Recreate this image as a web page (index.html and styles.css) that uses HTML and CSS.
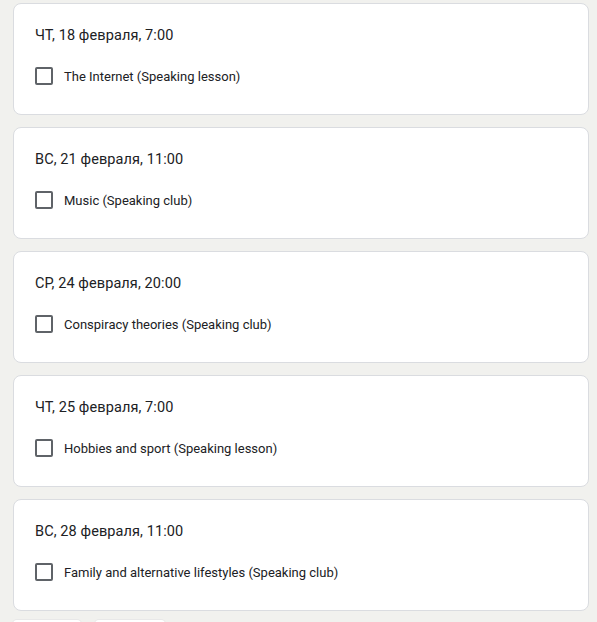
FILE: index.html
```html
<!DOCTYPE html>
<html lang="ru">
<head>
<meta charset="utf-8">
<link rel="stylesheet" href="styles.css">
</head>
<body>
<div class="list">
  <div class="card">
    <div class="title">ЧТ, 18 февраля, 7:00</div>
    <label class="option"><span class="box"></span><span class="text">The Internet (Speaking lesson)</span></label>
  </div>
  <div class="card">
    <div class="title">ВС, 21 февраля, 11:00</div>
    <label class="option"><span class="box"></span><span class="text">Music (Speaking club)</span></label>
  </div>
  <div class="card">
    <div class="title">СР, 24 февраля, 20:00</div>
    <label class="option"><span class="box"></span><span class="text">Conspiracy theories (Speaking club)</span></label>
  </div>
  <div class="card">
    <div class="title">ЧТ, 25 февраля, 7:00</div>
    <label class="option"><span class="box"></span><span class="text">Hobbies and sport (Speaking lesson)</span></label>
  </div>
  <div class="card">
    <div class="title">ВС, 28 февраля, 11:00</div>
    <label class="option"><span class="box"></span><span class="text">Family and alternative lifestyles (Speaking club)</span></label>
  </div>
  <div class="buttons">
    <span class="btn btn-back"></span>
    <span class="btn btn-next"></span>
  </div>
</div>
</body>
</html>
```

FILE: styles.css
```css
html, body {
  margin: 0;
  padding: 0;
  background: #f1f1ee;
  font-family: Roboto, "Noto Sans", Arial, sans-serif;
  color: #202124;
}
.list {
  display: flex;
  flex-direction: column;
  gap: 12px;
  padding: 3px 8px 0 13px;
}
.card {
  background: #fff;
  border: 1px solid #dadce0;
  border-radius: 8px;
  box-sizing: border-box;
  height: 112px;
  padding: 22px 21px 0 21px;
}
.title {
  font-size: 14.5px;
  line-height: 20px;
  color: #202124;
  letter-spacing: 0.1px;
}
.option {
  display: flex;
  align-items: center;
  margin-top: 20px;
  height: 20px;
}
.box {
  width: 14px;
  height: 14px;
  border: 2px solid #5f6368;
  border-radius: 2px;
  flex: none;
}
.text {
  margin-left: 11px;
  font-size: 13px;
  color: #202124;
}
.buttons {
  display: flex;
  gap: 14px;
  margin-top: -3px;
}
.btn {
  background: #fff;
  height: 30px;
  border-radius: 4px;
  box-shadow: 0 0 0 1px #e8e8e8;
}
.btn-back { width: 68px; }
.btn-next { width: 70px; }
```
